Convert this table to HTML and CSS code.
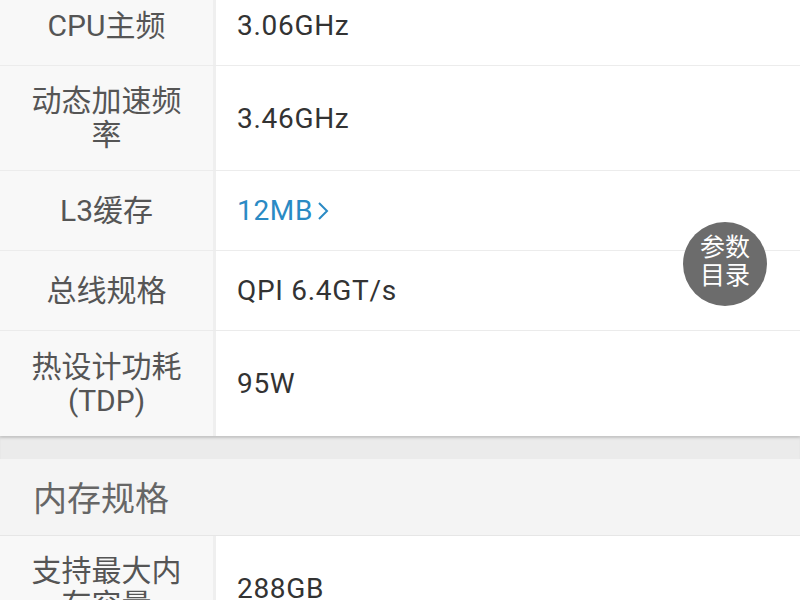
FILE: index.html
```html
<!DOCTYPE html>
<html lang="zh">
<head>
<meta charset="utf-8">
<link rel="stylesheet" href="styles.css">
</head>
<body>
<div class="page">
  <div class="table">
    <div class="row"><div class="label">CPU主频</div><div class="value">3.06GHz</div></div>
    <div class="row"><div class="label">动态加速频率</div><div class="value">3.46GHz</div></div>
    <div class="row"><div class="label">L3缓存</div><div class="value link">12MB<svg class="chev" width="14" height="24" viewBox="0 0 14 24"><path d="M3 4 L11 12 L3 20" fill="none" stroke="#2a8ac4" stroke-width="2"/></svg></div></div>
    <div class="row"><div class="label">总线规格</div><div class="value">QPI 6.4GT/s</div></div>
    <div class="row last"><div class="label">热设计功耗(TDP)</div><div class="value">95W</div></div>
  </div>
  <div class="gap"></div>
  <div class="section">内存规格</div>
  <div class="table">
    <div class="row"><div class="label">支持最大内存容量</div><div class="value">288GB</div></div>
  </div>
  <div class="fab">参数<br>目录</div>
</div>
</body>
</html>
```
FILE: styles.css
```css
html, body { margin: 0; padding: 0; background: #fff; }
body { font-family: Roboto, "Noto Sans CJK SC", sans-serif; overflow: hidden; width: 800px; height: 600px; }
.page { position: relative; margin-top: -14px; }
.table { background: #fff; }
.row { display: flex; border-bottom: 1px solid #ececec; min-height: 79px; }
.row.last { border-bottom: none; min-height: 105px; box-shadow: 0 2px 3px rgba(0,0,0,0.12); position: relative; z-index: 1; }
.label {
  width: 165px; flex: none; padding: 18px 24px;
  background: #f8f8f8; border-right: 3px solid #efefef;
  color: #555; font-size: 30px; line-height: 34px; text-align: center;
  display: flex; align-items: center; justify-content: center;
  box-sizing: content-box;
}
.value {
  flex: 1; display: flex; align-items: center; padding-left: 21px;
  color: #333; font-size: 28px; letter-spacing: 0.7px;
}
.link { color: #2a8ac4; }
.chev { margin-left: 3px; }
.gap { height: 23px; background: #ebebeb; box-shadow: inset 0 2px 2px rgba(0,0,0,0.06); }
.section {
  height: 76px; background: #f4f4f4; border-bottom: 1px solid #e6e6e6;
  color: #666; font-size: 34px; line-height: 76px; padding-left: 33px;
  font-family: "Noto Sans CJK SC", sans-serif;
}
.fab {
  position: absolute; left: 683px; top: 236px; width: 84px; height: 84px; border-radius: 50%;
  background: #6c6c6c; color: #fff; font-size: 25px; line-height: 28px; text-align: center;
  display: flex; align-items: center; justify-content: center;
  box-sizing: border-box; padding-bottom: 10px;
  font-family: "Noto Sans CJK SC", sans-serif;
}
```
